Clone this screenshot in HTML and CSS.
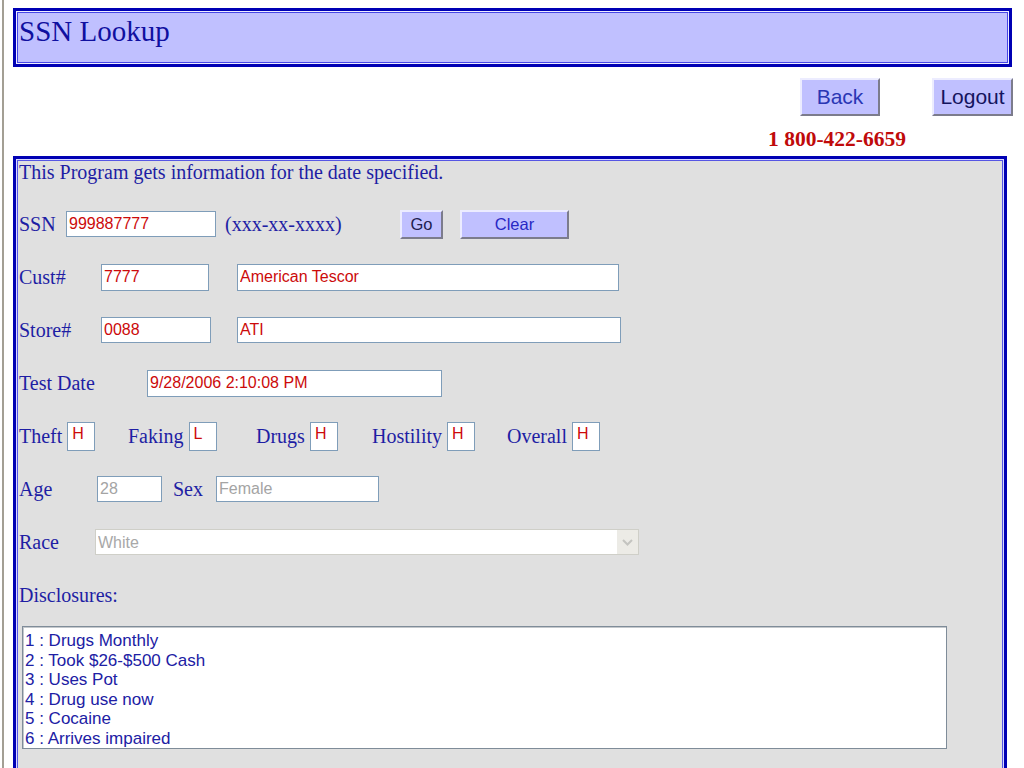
FILE: index.html
```html
<!DOCTYPE html>
<html lang="en">
<head>
  <meta charset="UTF-8" />
  <title>SSN Lookup</title>
  <link rel="stylesheet" href="styles.css">
</head>
<body>
<div class="frame">
  <div class="title-bar">
    <h1>SSN Lookup</h1>
  </div>
  <div class="toolbar">
    <div class="back-col">
      <button class="nav-btn back">Back</button>
      <div class="phone">1 800-422-6659</div>
    </div>
    <button class="nav-btn logout">Logout</button>
  </div>
  <form class="panel">
    <p class="intro">This Program gets information for the date specified.</p>
    <div class="rows">
      <div class="row">
        <span class="lbl w-ssn">SSN</span>
        <input type="text" class="field w-150" value="999887777" />
        <span class="hint">(xxx-xx-xxxx)</span>
        <button type="button" class="small-btn go">Go</button>
        <button type="button" class="small-btn clear">Clear</button>
      </div>
      <div class="row">
        <span class="lbl w-82">Cust#</span>
        <input type="text" class="field w-108" value="7777" />
        <input type="text" class="field w-382 gap-28" value="American Tescor" />
      </div>
      <div class="row">
        <span class="lbl w-82">Store#</span>
        <input type="text" class="field w-110" value="0088" />
        <input type="text" class="field w-384 gap-26" value="ATI" />
      </div>
      <div class="row">
        <span class="lbl w-128">Test Date</span>
        <input type="text" class="field w-295 tall" value="9/28/2006 2:10:08 PM" />
      </div>
      <div class="row">
        <div class="score g1"><span class="lbl">Theft</span><input type="text" class="field score-box" value="H" /></div>
        <div class="score g2"><span class="lbl">Faking</span><input type="text" class="field score-box" value="L" /></div>
        <div class="score g3"><span class="lbl">Drugs</span><input type="text" class="field score-box" value="H" /></div>
        <div class="score g4"><span class="lbl">Hostility</span><input type="text" class="field score-box" value="H" /></div>
        <div class="score"><span class="lbl">Overall</span><input type="text" class="field score-box" value="H" /></div>
      </div>
      <div class="row">
        <span class="lbl w-78">Age</span>
        <input type="text" class="field w-65 off" value="28" disabled />
        <span class="lbl sex">Sex</span>
        <input type="text" class="field w-163 off" value="Female" disabled />
      </div>
      <div class="row">
        <span class="lbl w-76">Race</span>
        <span class="race">
          <select class="race-select" disabled>
            <option>White</option>
          </select>
          <span class="race-arrow">
            <svg width="11" height="7" viewBox="0 0 11 7"><path d="M1 1 L5.5 5.5 L10 1" fill="none" stroke="#c4c4c0" stroke-width="2"/></svg>
          </span>
        </span>
      </div>
      <div class="row">
        <span class="lbl">Disclosures:</span>
      </div>
    </div>
    <div class="disclosures">
      <div>1 : Drugs Monthly</div>
      <div>2 : Took $26-$500 Cash</div>
      <div>3 : Uses Pot</div>
      <div>4 : Drug use now</div>
      <div>5 : Cocaine</div>
      <div>6 : Arrives impaired</div>
    </div>
  </form>
</div>
</body>
</html>
```

FILE: styles.css
```css
:root {
  --navy: #0000b4;
  --lavender: #c0c0ff;
  --label: #1e1ea4;
  --red: #cc0a0a;
}
* {
  box-sizing: border-box;
}
html, body {
  margin: 0;
  padding: 0;
  background: #ffffff;
  font-family: "Liberation Serif", "Times New Roman", serif;
  color: var(--label);
  overflow: hidden;
}
.frame {
  margin-left: 2px;
  border-left: 2px solid #a39f94;
  padding: 8px 0 0 9px;
  min-height: 768px;
}
.title-bar {
  margin-right: 12px;
  height: 59px;
  background: var(--lavender);
  border: 3px solid var(--navy);
  box-shadow: inset 0 0 0 1px #eeeeff, inset 0 0 0 2px #4646e6;
  padding: 4px 0 0 3px;
}
h1 {
  margin: 0;
  font-size: 29px;
  font-weight: normal;
  color: #1010a0;
}
.toolbar {
  display: flex;
  justify-content: flex-end;
  align-items: flex-start;
  margin-top: 11px;
  padding-right: 11px;
}
.back-col {
  width: 160px;
  display: flex;
  flex-direction: column;
  align-items: center;
}
.nav-btn, .small-btn {
  background: var(--lavender);
  border: 2px solid;
  border-color: #ececff #7c7c8c #7c7c8c #ececff;
  font-family: "Liberation Sans", Arial, sans-serif;
  padding: 0;
  cursor: pointer;
}
.nav-btn {
  width: 80px;
  height: 38px;
  font-size: 21px;
}
.back {
  color: #2a36b4;
}
.logout {
  width: 81px;
  margin-left: 12px;
  color: #14145e;
}
.phone {
  margin: 11px 6px 0 0;
  font-size: 21.5px;
  font-weight: bold;
  color: #c00a0a;
}
.panel {
  display: block;
  margin: 4px 17px 0 0;
  background: #e0e0e0;
  border: 3px solid var(--navy);
  box-shadow: inset 0 0 0 1px #d8d8ff, inset 0 0 0 2px #5656e4;
  padding: 2px 0 40px 3px;
  font-size: 20px;
}
.intro {
  margin: 0;
}
.rows {
  margin-top: 25px;
  display: flex;
  flex-direction: column;
  gap: 23px;
}
.row {
  display: flex;
  align-items: center;
  height: 30px;
}
.lbl {
  flex: none;
  white-space: nowrap;
}
.w-ssn { width: 47px; }
.w-82 { width: 82px; }
.w-128 { width: 128px; }
.w-78 { width: 78px; }
.w-76 { width: 76px; }
.field {
  flex: none;
  height: 26px;
  background: #ffffff;
  border: 1px solid #7f9db9;
  font-family: "Liberation Sans", Arial, sans-serif;
  font-size: 16px;
  color: var(--red);
  padding: 0 2px;
}
.field.tall { height: 27px; }
.w-150 { width: 150px; }
.w-108 { width: 108px; height: 27px; }
.w-110 { width: 110px; }
.w-382 { width: 382px; height: 27px; }
.w-384 { width: 384px; }
.w-295 { width: 295px; }
.w-65 { width: 65px; }
.w-163 { width: 163px; }
.gap-28 { margin-left: 28px; }
.gap-26 { margin-left: 26px; }
.hint {
  margin-left: 9px;
  width: 175px;
}
.small-btn {
  height: 29px;
  font-size: 16.5px;
}
.go {
  width: 43px;
  color: #20204e;
}
.clear {
  width: 109px;
  margin-left: 17px;
  color: #2828c4;
}
.score {
  display: flex;
  align-items: center;
  gap: 5px;
  flex: none;
}
.g1 { width: 109px; }
.g2 { width: 128px; }
.g3 { width: 116px; }
.g4 { width: 135px; }
.score-box {
  width: 28px;
  height: 29px;
  padding: 0 0 4px 4px;
}
.off {
  color: #a4a4a4;
}
.sex {
  margin-left: 11px;
  width: 43px;
}
.race {
  position: relative;
  display: block;
  width: 544px;
  height: 26px;
}
.race-select {
  appearance: none;
  -webkit-appearance: none;
  width: 100%;
  height: 100%;
  background: #ffffff;
  border: 1px solid #cfcfc8;
  font-family: "Liberation Sans", Arial, sans-serif;
  font-size: 16px;
  color: #a8a8a8;
  padding: 0 2px;
  opacity: 1;
}
.race-arrow {
  position: absolute;
  top: 1px;
  right: 1px;
  width: 21px;
  height: 24px;
  background: #ecebe6;
  display: flex;
  align-items: center;
  justify-content: center;
}
.disclosures {
  margin: 16px 0 0 3px;
  width: 925px;
  height: 123px;
  background: #ffffff;
  border: 1px solid #7f8c99;
  box-shadow: inset 1px 1px 0 #c4c8cc;
  padding: 4px 0 0 2px;
  font-family: "Liberation Sans", Arial, sans-serif;
  font-size: 17px;
  line-height: 19.5px;
  color: #2020a4;
}
```
